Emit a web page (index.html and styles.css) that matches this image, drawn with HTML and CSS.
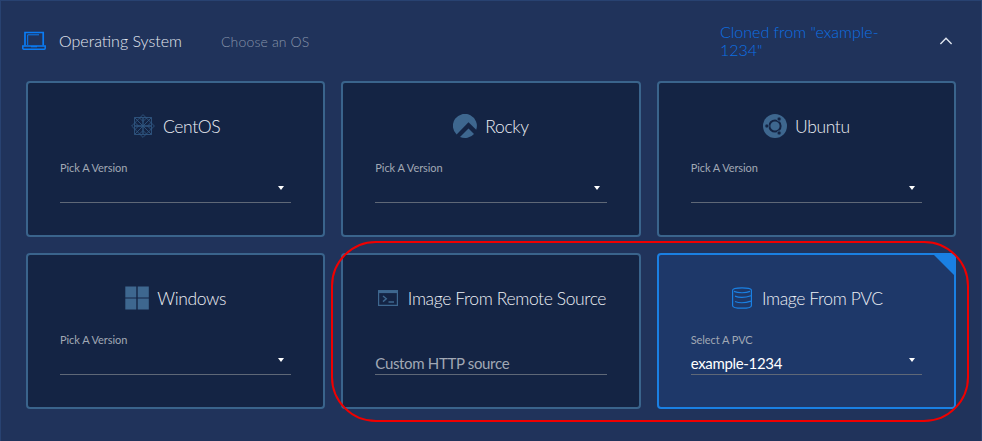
FILE: index.html
```html
<!DOCTYPE html>
<html lang="en">
<head>
<meta charset="utf-8">
<title>Operating System</title>
<link rel="stylesheet" href="styles.css">
</head>
<body>
<main class="panel">
  <header class="head">
    <svg class="laptop" viewBox="0 0 24 20" fill="none" stroke="#0a7cf5"><path d="M3 14.5V1.5H21.2V14.5" stroke-width="1.7"/><path d="M5.7 14V3.8H17" stroke-width="1"/><path d="M.8 14.9H23.2V17.3Q23.2 18.2 22.2 18.2H1.8Q.8 18.2 .8 17.3Z" stroke-width="1.5"/><path d="M9 15.7H15" stroke-width="1.2"/></svg>
    <h1 class="head-title">Operating System</h1>
    <span class="head-hint">Choose an OS</span>
    <span class="head-value">Cloned from "example-1234"</span>
    <svg class="chevron" viewBox="0 0 14 8" fill="none" stroke="#dfe5ef" stroke-width="1.4"><path d="M1.4 6.9L7 1.3L12.6 6.9"/></svg>
  </header>
  <section class="cards">
    <article class="card">
      <h2 class="card-title"><svg class="icon" viewBox="0 0 24 24" fill="none" stroke="#2f5680" stroke-width=".9"><path d="M3.5 3.5H20.5V20.5H3.5ZM12 .6L23.4 12L12 23.4L.6 12ZM3.5 3.5L20.5 20.5M20.5 3.5L3.5 20.5M8 3.5L12 7.5L16 3.5M8 20.5L12 16.5L16 20.5M3.5 8L7.5 12L3.5 16M20.5 8L16.5 12L20.5 16"/><path d="M12 4V20M4 12H20" stroke-width="1.3"/></svg><span>CentOS</span></h2>
      <div class="field"><span class="label">Pick A Version</span><span class="value"></span><i class="arrow"></i></div>
    </article>
    <article class="card">
      <h2 class="card-title"><svg class="icon" viewBox="0 0 24 24" fill="#3e678f"><path d="M3.6 20.5A12 12 0 1 1 23.2 15.8L15.5 8.3Z"/><path d="M7 22.9L15.5 14.5L21 19.9A12 12 0 0 1 7 22.9Z"/></svg><span>Rocky</span></h2>
      <div class="field"><span class="label">Pick A Version</span><span class="value"></span><i class="arrow"></i></div>
    </article>
    <article class="card">
      <h2 class="card-title"><svg class="icon" viewBox="0 0 24 24"><circle cx="12" cy="12" r="12" fill="#3e678f"/><circle cx="12" cy="12" r="5.6" fill="none" stroke="#142444" stroke-width="2"/><g fill="#142444" stroke="#3e678f" stroke-width=".8"><circle cx="3.9" cy="12" r="2.1"/><circle cx="16.1" cy="5" r="2.1"/><circle cx="16.1" cy="19" r="2.1"/></g></svg><span>Ubuntu</span></h2>
      <div class="field"><span class="label">Pick A Version</span><span class="value"></span><i class="arrow"></i></div>
    </article>
    <article class="card">
      <h2 class="card-title"><svg class="icon" viewBox="0 0 24 24" fill="#3e678f"><path d="M.3 .5H11.3V11.5H.3ZM12.7 .5H23.8V11.5H12.7ZM.3 12.5H11.3V23.5H.3ZM12.7 12.5H23.8V23.5H12.7Z"/></svg><span>Windows</span></h2>
      <div class="field"><span class="label">Pick A Version</span><span class="value"></span><i class="arrow"></i></div>
    </article>
    <article class="card">
      <h2 class="card-title"><svg class="icon" viewBox="0 0 24 24" fill="none" stroke="#3e678f"><path d="M2.6 4.8H21.4V19.4H2.6Z" stroke-width="1.2"/><path d="M2 5.6H22" stroke-width="3"/><path d="M7 10L10.3 12.8L7 15.6M12.5 16H18" stroke-width="1.4"/></svg><span>Image From Remote Source</span></h2>
      <div class="field"><span class="label"></span><span class="value placeholder">Custom HTTP source</span></div>
    </article>
    <article class="card selected">
      <h2 class="card-title"><svg class="icon" viewBox="0 0 24 24" fill="none" stroke="#1a80e3" stroke-width="1.2"><path d="M2.6 4.3V19.7C2.6 23 21.4 23 21.4 19.7V4.3C21.4 1 2.6 1 2.6 4.3"/><path d="M4 5.4C8 7.2 16 7.2 20 5.4M5 10.1C9 11.7 15 11.7 21 9.7M5 15.5C9 17.1 15 17.1 21 15.1"/></svg><span>Image From PVC</span></h2>
      <div class="field"><span class="label">Select A PVC</span><span class="value">example-1234</span><i class="arrow"></i></div>
    </article>
  </section>
  <div class="highlight"></div>
</main>
</body>
</html>
```
FILE: styles.css
```css
* { box-sizing: border-box; }
body { margin: 0; background: #20335b; font-family: Lato, sans-serif; }
.panel {
  position: relative;
  height: 441px;
  padding: 0 25px;
  border: 1px solid #284271;
  border-bottom: 0;
  background: #20335b;
}
.head { display: flex; align-items: center; height: 80px; margin-left: -4px; }
.laptop { width: 24px; height: 20px; flex: none; }
.head-title { margin: 0 0 2px 13px; width: 162px; font-size: 16px; font-weight: 300; color: #e4e8f0; white-space: nowrap; }
.head-hint { width: 499px; font-size: 14px; letter-spacing: .15px; font-weight: 300; color: #8793aa; }
.head-value { width: 180px; font-size: 16px; line-height: 18px; font-weight: 300; color: #0d70e4; }
.chevron { width: 14px; height: 8px; margin: 0 0 1px 39px; flex: none; }
.cards { display: grid; grid-template-columns: repeat(3, minmax(0, 1fr)); grid-auto-rows: 156px; gap: 16px; }
.card {
  position: relative;
  padding: 31px 32px 0;
  border: 2px solid #3a648c;
  border-radius: 4px;
  background: #142444;
}
.selected { border-color: #1a80e3; background: #1e3869; }
.selected::after {
  content: "";
  position: absolute;
  top: 0;
  right: 0;
  border: solid transparent;
  border-width: 0 20px 20px 0;
  border-right-color: #1a80e3;
}
.card-title {
  display: flex;
  align-items: center;
  justify-content: center;
  gap: 8px;
  height: 24px;
  margin: 0;
  font-size: 17.5px;
  letter-spacing: -.38px;
  font-weight: 300;
  color: #eceff5;
  white-space: nowrap;
}
.icon { width: 24px; height: 24px; flex: none; }
.field {
  position: relative;
  display: flex;
  flex-direction: column;
  height: 42px;
  margin-top: 23px;
  border-bottom: 1px solid #5f6877;
}
.label { height: 14px; font-size: 11px; letter-spacing: -.07px; line-height: 14px; color: #a1a8b4; }
.value { height: 20px; margin-top: 6px; font-size: 15px; letter-spacing: -.33px; line-height: 20px; color: #fff; }
.placeholder { color: #a1a8b4; }
.arrow {
  position: absolute;
  right: 7px;
  bottom: 12px;
  border: solid transparent;
  border-width: 4px 3px 0;
  border-top-color: #fff;
}
.highlight {
  position: absolute;
  left: 330px;
  top: 240px;
  width: 638px;
  height: 181px;
  border: 2px solid #f00000;
  border-radius: 45px;
}
```
